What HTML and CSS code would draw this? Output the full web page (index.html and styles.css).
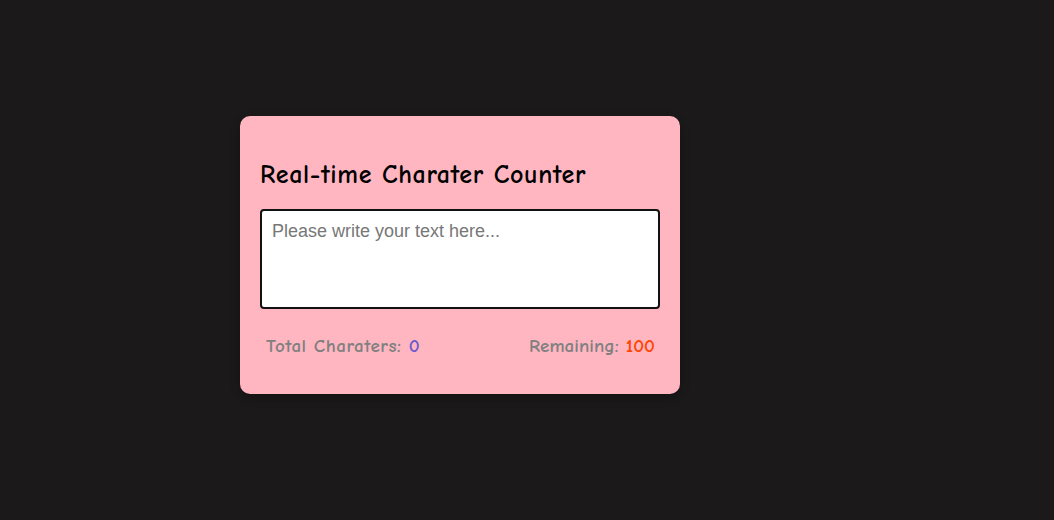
FILE: index.html
```html
<!DOCTYPE html>
<html lang="en">
<head>
<meta charset="utf-8">
<title>Real-time Charater Counter</title>
<link rel="stylesheet" href="styles.css">
</head>
<body>
<main class="page">
  <section class="card">
    <h2 class="title">Real-time Charater Counter</h2>
    <textarea class="input" placeholder="Please write your text here..."></textarea>
    <div class="stats">
      <p class="stat stat-total">Total Charaters: <span class="count">0</span></p>
      <p class="stat stat-remaining">Remaining: <span class="remaining">100</span></p>
    </div>
  </section>
</main>
</body>
</html>
```
FILE: styles.css
```css
* { box-sizing: border-box; }
html, body { margin: 0; height: 100%; }
body {
  background: #1b191a;
  font-family: "Comic Sans MS", "Comic Neue", cursive;
}
.page {
  height: 100%;
  display: flex;
  align-items: center;
  padding-left: 240px;
}
.card {
  width: 440px;
  height: 278px;
  margin-top: -11px;
  background: #ffb6c1;
  border-radius: 10px;
  padding: 20px;
  box-shadow: 0 4px 10px rgba(0,0,0,0.25);
}
.title {
  margin: 23px 0 17px;
  font-size: 26px;
  line-height: 33px;
  letter-spacing: 0.65px;
  color: #000;
}
.input {
  display: block;
  width: 100%;
  height: 100px;
  border: 2px solid #111;
  border-radius: 4px;
  padding: 10px;
  font-family: "Liberation Sans", Arial, sans-serif;
  font-size: 18px;
  resize: none;
  background: #fff;
}
.input::placeholder { color: #777; }
.stats {
  display: flex;
  justify-content: space-between;
  padding: 0 5px 0 6px;
  margin-top: 25px;
}
.stat {
  margin: 0;
  font-size: 19px;
  line-height: 25px;
  font-weight: 700;
  color: #808080;
}
.stat-total { letter-spacing: 0.5px; }
.stat-remaining { letter-spacing: 0.05px; }
.count { color: #6a5acd; }
.remaining { color: #ff4500; }
```
